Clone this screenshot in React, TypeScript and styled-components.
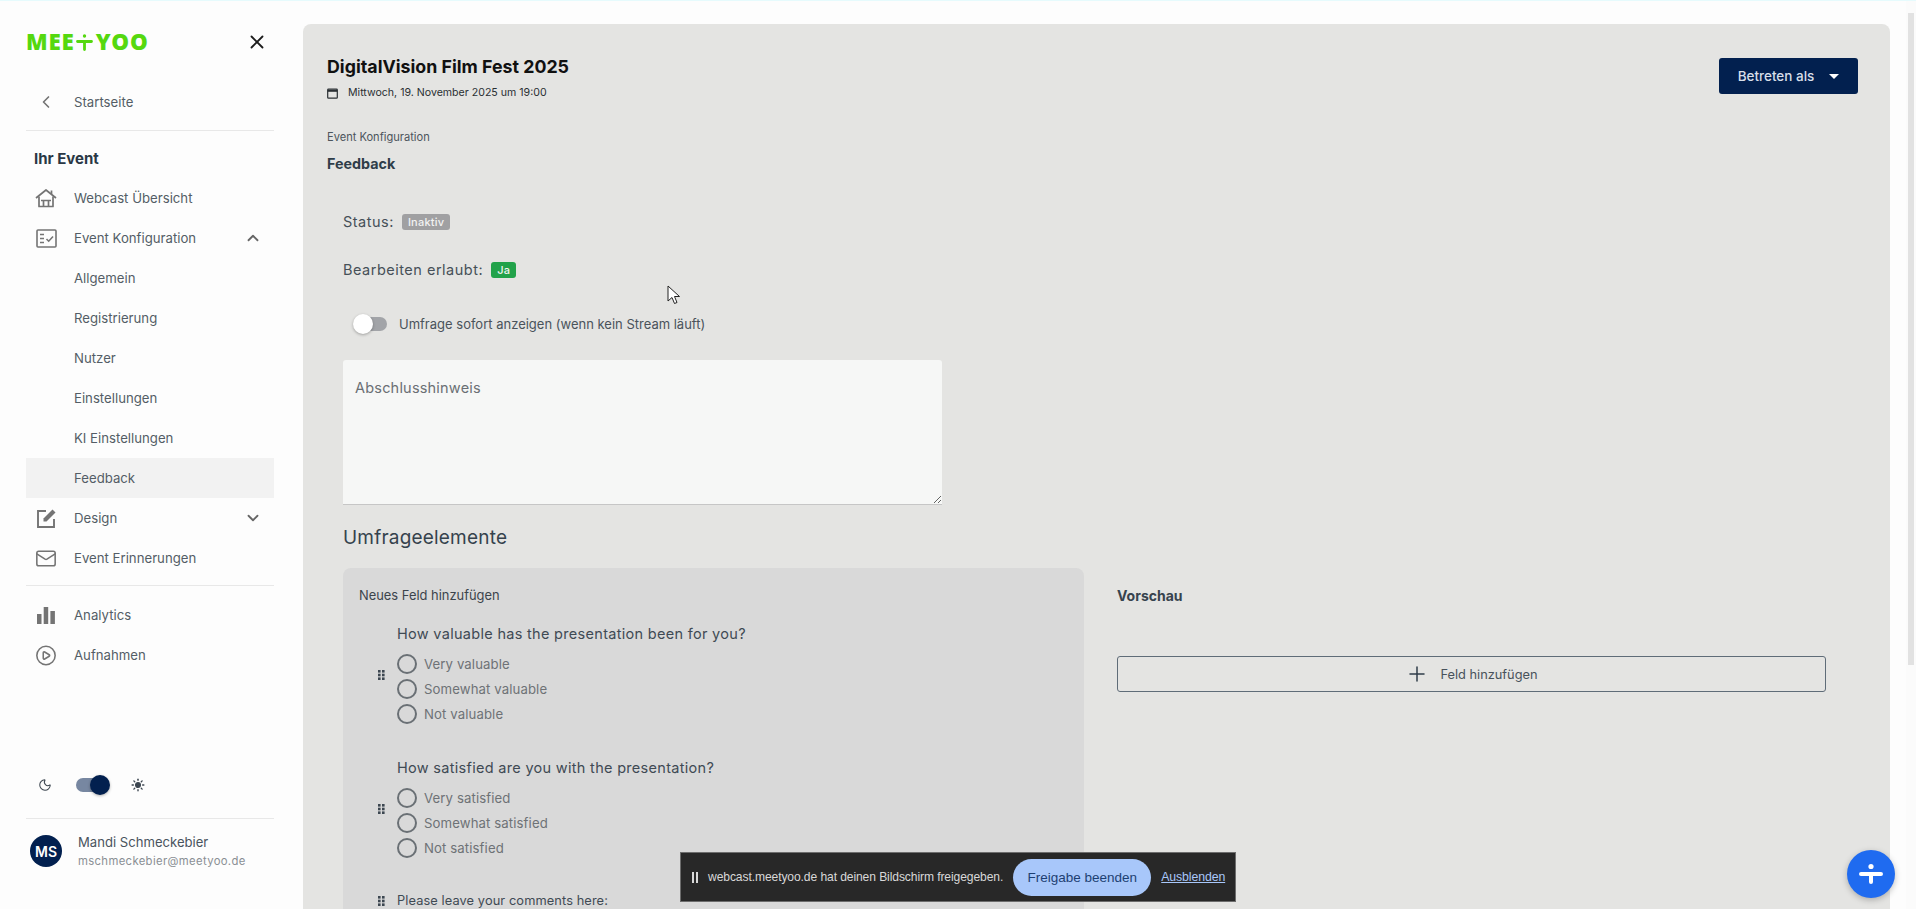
import React from 'react';
import styled, { createGlobalStyle } from 'styled-components';
import {
  ChevronLeft, ChevronUp, ChevronDown, X, Mail, CirclePlay, Moon, Sun, Plus,
} from 'lucide-react';

const Global = createGlobalStyle`
  html, body { margin: 0; padding: 0; height: 100%; overflow: hidden; background: #fdfdfd; }
  body { font-family: Inter, "Liberation Sans", sans-serif; color: #2f3a45; }
  #root { height: 100%; }
  * { box-sizing: border-box; }
`;

const Page = styled.div`
  position: relative;
  height: 909px;
  display: flex;
  border-top: 1px solid #e6fbfd;
  background: #fdfdfd;
`;

const Sidebar = styled.aside`
  width: 303px;
  flex: none;
  height: 908px;
  padding: 0 29px 0 26px;
  display: flex;
  flex-direction: column;
`;

const LogoRow = styled.div`
  height: 81px;
  display: flex;
  align-items: center;
  justify-content: space-between;
  padding-right: 6px;
  color: #1c1c1c;
`;

const Logo = styled.div`
  font-family: "Open Sans", sans-serif;
  font-weight: 800;
  font-size: 22.4px;
  letter-spacing: 0.8px;
  line-height: 1;
  color: #55d80f;
  display: flex;
  align-items: center;
  margin-top: 2px;
`;

const LogoPlus = styled.svg`
  width: 17px;
  height: 17px;
  margin: 0 3px 0 1px;
`;

const NavRow = styled.div<{ $active?: boolean }>`
  height: 40px;
  display: flex;
  align-items: center;
  font-size: 13.2px;
  color: #545d66;
  padding-left: 9px;
  padding-right: 12px;
  background: ${p => (p.$active ? '#f2f2f2' : 'transparent')};
`;

const NavIcon = styled.span`
  width: 22px;
  height: 24px;
  margin-right: 17px;
  display: flex;
  align-items: center;
  justify-content: center;
  color: #747474;
  flex: none;
`;

const NavText = styled.span<{ $sub?: boolean }>`
  flex: 1;
  margin-left: ${p => (p.$sub ? '39px' : '0')};
`;

const Divider = styled.hr<{ $top?: number; $bottom?: number }>`
  border: 0;
  border-top: 1px solid #e8e8e8;
  margin: ${p => p.$top ?? 0}px 0 ${p => p.$bottom ?? 0}px;
`;

const SectionTitle = styled.div`
  font-size: 15px;
  font-weight: 700;
  color: #2a3845;
  padding-left: 8px;
  height: 40px;
  margin-top: 7px;
  display: flex;
  align-items: center;
`;

const Spacer = styled.div`
  flex: 1;
`;

const ThemeRow = styled.div`
  display: flex;
  align-items: center;
  height: 40px;
  padding-left: 12px;
  color: #3c4650;
`;

const ThemeSwitch = styled.div`
  position: relative;
  width: 32px;
  height: 14px;
  margin: 0 23px 0 24px;
  border-radius: 7px;
  background: #7787a1;
`;

const ThemeKnob = styled.div`
  position: absolute;
  right: -2px;
  top: -3px;
  width: 20px;
  height: 20px;
  border-radius: 50%;
  background: #02204f;
  box-shadow: 0 1px 3px rgba(0, 0, 0, 0.3);
`;

const UserRow = styled.div`
  height: 90px;
  display: flex;
  align-items: flex-start;
  padding: 16px 0 0 4px;
  gap: 16px;
`;

const Avatar = styled.div`
  width: 32px;
  height: 32px;
  border-radius: 50%;
  background: #02204f;
  color: #fff;
  display: flex;
  align-items: center;
  justify-content: center;
  font-size: 14px;
  font-weight: 600;
`;

const UserName = styled.div`
  font-size: 13.1px;
  color: #4a545e;
  line-height: 18px;
  margin-top: -2px;
`;

const UserMail = styled.div`
  font-size: 11.3px;
  letter-spacing: 0.35px;
  color: #8a8f94;
  line-height: 18px;
  margin-top: 1px;
`;

const Scroller = styled.div`
  flex: 1;
  height: 908px;
  overflow: hidden;
  padding: 23px 26px 0 0;
  position: relative;
`;

const ScrollTrack = styled.div`
  position: absolute;
  right: 0;
  top: 0;
  bottom: 0;
  width: 10px;
  background: #fbfbfb;
`;

const ScrollThumb = styled.div`
  position: absolute;
  left: 2px;
  right: 2px;
  top: 12px;
  height: 652px;
  background: #e2e2e2;
`;

const MainPanel = styled.main`
  min-height: 1200px;
  background: #e4e4e2;
  border-radius: 8px 8px 0 0;
  padding: 31px 24px 0;
`;

const HeaderRow = styled.div`
  display: flex;
  justify-content: space-between;
  align-items: flex-start;
`;

const EventTitle = styled.h1`
  margin: 0;
  font-size: 17.8px;
  line-height: 24px;
  font-weight: 700;
  color: #111;
`;

const DateLine = styled.div`
  display: flex;
  align-items: center;
  gap: 10px;
  font-size: 10.6px;
  line-height: 14px;
  color: #2a2f33;
  margin-top: 7px;
`;

const EnterButton = styled.button`
  height: 36px;
  width: 139px;
  margin: 3px 8px 0 0;
  border: 0;
  border-radius: 3px;
  background: #02204f;
  color: #d8dfe9;
  font: 500 13.5px Inter, sans-serif;
  display: flex;
  align-items: center;
  justify-content: center;
  gap: 15px;
`;

const Caret = styled.span`
  width: 0;
  height: 0;
  border-left: 5px solid transparent;
  border-right: 5px solid transparent;
  border-top: 5px solid #fff;
`;

const Crumb = styled.div`
  font-size: 11.1px;
  line-height: 14px;
  color: #4c555c;
  margin-top: 30px;
`;

const PageTitle = styled.h2`
  margin: 10px 0 0;
  font-size: 14.3px;
  line-height: 20px;
  font-weight: 700;
  color: #2f3d49;
`;

const Body = styled.div`
  padding: 0 0 0 16px;
`;

const StatusRow = styled.div<{ $top: number }>`
  display: flex;
  align-items: center;
  gap: 8px;
  margin-top: ${p => p.$top}px;
  font-size: 14.5px;
  line-height: 20px;
  letter-spacing: 0.5px;
  color: #465058;
`;

const Badge = styled.span<{ $bg: string }>`
  background: ${p => p.$bg};
  color: #f2f2f2;
  border-radius: 3px;
  font-size: 11px;
  font-weight: 500;
  line-height: 16px;
  padding: 0 6px;
  letter-spacing: 0.2px;
`;

const ToggleRow = styled.div`
  display: flex;
  align-items: center;
  margin: 34px 0 0 10px;
  gap: 12px;
  font-size: 13px;
  line-height: 20px;
  color: #4a535b;
`;

const Toggle = styled.div`
  position: relative;
  width: 32px;
  height: 14px;
  margin-left: 2px;
  border-radius: 7px;
  background: #a2a4a8;
`;

const ToggleKnob = styled.div`
  position: absolute;
  left: -2px;
  top: -3px;
  width: 20px;
  height: 20px;
  border-radius: 50%;
  background: #fff;
  box-shadow: 0 1px 3px rgba(0, 0, 0, 0.3);
`;

const NoteArea = styled.textarea`
  display: block;
  width: 599px;
  height: 145px;
  margin-top: 26px;
  padding: 19px 12px;
  border: 0;
  border-bottom: 1px solid #c6c6c6;
  border-radius: 3px 3px 0 0;
  background: #f6f7f6;
  font: 14.5px Inter, sans-serif;
  letter-spacing: 0.2px;
  outline: none;
  &::placeholder { color: #6a6f74; opacity: 1; }
`;

const SectionHeading = styled.h3`
  margin: 19px 0 0;
  font-size: 19px;
  line-height: 28px;
  font-weight: 400;
  letter-spacing: 0.2px;
  color: #35424d;
`;

const Columns = styled.div`
  display: flex;
  margin-top: 16px;
`;

const BuilderCard = styled.div`
  width: 741px;
  flex: none;
  min-height: 520px;
  background: #d9d9d9;
  border-radius: 8px;
  padding: 18px 16px 0;
`;

const CardLabel = styled.div`
  font-size: 12.9px;
  line-height: 20px;
  color: #3c444c;
`;

const FieldBlock = styled.div<{ $top: number }>`
  display: flex;
  align-items: center;
  margin-top: ${p => p.$top}px;
`;

const Grip = styled.span`
  width: 38px;
  padding-left: 19px;
  flex: none;
  display: flex;
  color: #3c4650;
`;

const Question = styled.div<{ $small?: boolean }>`
  font-size: ${p => (p.$small ? '12.8px' : '14.5px')};
  line-height: 20px;
  letter-spacing: ${p => (p.$small ? '0.1px' : '0.3px')};
  color: #3f4a54;
`;

const Options = styled.div`
  margin-top: 7px;
`;

const Option = styled.label`
  height: 25px;
  display: flex;
  align-items: center;
  gap: 7px;
  font-size: 13.2px;
  letter-spacing: 0.1px;
  color: #6e7276;
`;

const Radio = styled.span`
  width: 20px;
  height: 20px;
  border: 2px solid #6a7075;
  border-radius: 50%;
`;

const PreviewColumn = styled.div`
  width: 709px;
  margin-left: 33px;
  padding-top: 18px;
`;

const PreviewTitle = styled.div`
  font-size: 14px;
  font-weight: 700;
  line-height: 20px;
  color: #37434e;
`;

const AddFieldButton = styled.button`
  width: 100%;
  height: 36px;
  margin-top: 50px;
  border: 1px solid #5f6c78;
  border-width: 1.5px 1px;
  border-radius: 3px;
  background: transparent;
  color: #48525b;
  font: 12.8px Inter, sans-serif;
  display: flex;
  align-items: center;
  justify-content: center;
  gap: 11px;
`;

const ShareBar = styled.div`
  position: absolute;
  left: 680px;
  top: 851px;
  width: 556px;
  height: 50px;
  background: #282828;
  border: 1px solid #6d6d6d;
  display: flex;
  align-items: center;
  padding-left: 11px;
  font-family: "Liberation Sans", sans-serif;
  font-size: 12.1px;
  letter-spacing: -0.1px;
  color: #d8d8d8;
`;

const PauseIcon = styled.span`
  width: 6px;
  height: 11px;
  margin-right: 10px;
  border-left: 2px solid #d8d8d8;
  border-right: 2px solid #d8d8d8;
`;

const StopButton = styled.button`
  width: 138px;
  height: 37px;
  margin: 0 10px;
  border: 0;
  border-radius: 19px;
  background: #a8c7fa;
  color: #1d3f72;
  font: 13.5px "Liberation Sans", sans-serif;
`;

const HideLink = styled.a`
  color: #a8c7fa;
  font-size: 12.3px;
  text-decoration: underline;
`;

const Fab = styled.button`
  position: absolute;
  left: 1847px;
  top: 849px;
  width: 48px;
  height: 48px;
  border: 0;
  border-radius: 50%;
  background: #1f6bf0;
  box-shadow: 0 2px 6px rgba(0, 0, 0, 0.25);
  display: flex;
  align-items: center;
  justify-content: center;
  padding: 0;
`;

const Cursor = styled.svg`
  position: absolute;
  left: 667px;
  top: 284px;
  width: 14px;
  height: 21px;
`;

const HomeIcon = () => (
  <svg width="22" height="20" viewBox="0 0 22 20" fill="none" stroke="currentColor" strokeWidth="1.7" strokeLinejoin="round">
    <path d="M1 10 11 2l10 8" />
    <path d="M4 8.500V18.500h14V8.500" />
    <path d="M8.500 18.500v-6h5v6M6 12.500h10" />
    <path d="M16.500 2.500v3.500" />
  </svg>
);
const ConfigIcon = () => (
  <svg width="21" height="19" viewBox="0 0 21 19" fill="none" stroke="currentColor" strokeWidth="1.6">
    <rect x="1" y="1" width="19" height="17" rx="1" />
    <path d="M4 5.500h4M4 9.500h4M4 13.500h4M10.500 10l2.200 2.200L17 7.500" />
  </svg>
);
const DesignIcon = () => (
  <svg width="21" height="21" viewBox="0 0 21 21" fill="none" stroke="currentColor" strokeWidth="1.9">
    <path d="M10 3H2v16h16v-8" />
    <path d="M7.500 13.500v-3L16.500 1.500l3 3-9 9z" fill="currentColor" stroke="none" />
  </svg>
);
const BarsIcon = () => (
  <svg width="18" height="17" viewBox="0 0 18 17" fill="currentColor">
    <rect x="0" y="7" width="4.500" height="10" />
    <rect x="6.700" y="0" width="4.500" height="17" />
    <rect x="13.400" y="4" width="4.500" height="13" />
  </svg>
);
const CalendarIcon = () => (
  <svg width="11" height="11" viewBox="0 0 11 11" fill="none" stroke="#2a2f33" strokeWidth="1.2">
    <rect x="0.700" y="1.200" width="9.600" height="9" rx="0.800" />
    <path d="M0.700 2.800h9.600" strokeWidth="2" />
  </svg>
);
const GripDots = () => (
  <svg width="7" height="10" viewBox="0 0 7 10" fill="currentColor">
    {[0, 3.7, 7.4].map(y => (
      <React.Fragment key={y}>
        <rect x="0" y={y} width="2.600" height="2.600" />
        <rect x="4" y={y} width="2.600" height="2.600" />
      </React.Fragment>
    ))}
  </svg>
);

type Item = { label: string; icon?: React.ReactNode; chevron?: 'up' | 'down'; sub?: boolean; active?: boolean };
const configItems: Item[] = [
  { label: 'Webcast Übersicht', icon: <HomeIcon /> },
  { label: 'Event Konfiguration', icon: <ConfigIcon />, chevron: 'up' },
  { label: 'Allgemein', sub: true },
  { label: 'Registrierung', sub: true },
  { label: 'Nutzer', sub: true },
  { label: 'Einstellungen', sub: true },
  { label: 'KI Einstellungen', sub: true },
  { label: 'Feedback', sub: true, active: true },
  { label: 'Design', icon: <DesignIcon />, chevron: 'down' },
  { label: 'Event Erinnerungen', icon: <Mail size={23} strokeWidth={1.7} /> },
];
const mediaItems: Item[] = [
  { label: 'Analytics', icon: <BarsIcon /> },
  { label: 'Aufnahmen', icon: <CirclePlay size={23} strokeWidth={1.7} /> },
];

const Nav = ({ item }: { item: Item }) => (
  <NavRow $active={item.active}>
    {item.icon && <NavIcon>{item.icon}</NavIcon>}
    <NavText $sub={item.sub}>{item.label}</NavText>
    {item.chevron === 'up' && <ChevronUp size={18} color="#666" strokeWidth={2.4} />}
    {item.chevron === 'down' && <ChevronDown size={18} color="#666" strokeWidth={2.4} />}
  </NavRow>
);

const questions = [
  { q: 'How valuable has the presentation been for you?', o: ['Very valuable', 'Somewhat valuable', 'Not valuable'], top: 18 },
  { q: 'How satisfied are you with the presentation?', o: ['Very satisfied', 'Somewhat satisfied', 'Not satisfied'], top: 32 },
];

export default function App() {
  return (
    <Page>
      <Global />
      <Sidebar>
        <LogoRow>
          <Logo>
            MEE
            <LogoPlus viewBox="0 0 17 17">
              <path d="M1.500 7.500h14M8.500 7.500v8" stroke="#55d80f" strokeWidth="2.800" strokeLinecap="round" />
              <circle cx="8.500" cy="2" r="1.700" fill="#55d80f" />
            </LogoPlus>
            YOO
          </Logo>
          <X size={22} strokeWidth={2} />
        </LogoRow>
        <NavRow>
          <NavIcon><ChevronLeft size={20} strokeWidth={2} /></NavIcon>
          <NavText>Startseite</NavText>
        </NavRow>
        <Divider $top={8} />
        <SectionTitle>Ihr Event</SectionTitle>
        {configItems.map(i => <Nav key={i.label} item={i} />)}
        <Divider $top={7} $bottom={9} />
        {mediaItems.map(i => <Nav key={i.label} item={i} />)}
        <Spacer />
        <ThemeRow>
          <Moon size={14} strokeWidth={1.8} />
          <ThemeSwitch><ThemeKnob /></ThemeSwitch>
          <Sun size={14} strokeWidth={2.4} fill="currentColor" />
        </ThemeRow>
        <Divider $top={13} />
        <UserRow>
          <Avatar>MS</Avatar>
          <div>
            <UserName>Mandi Schmeckebier</UserName>
            <UserMail>mschmeckebier@meetyoo.de</UserMail>
          </div>
        </UserRow>
      </Sidebar>

      <Scroller>
        <MainPanel>
          <HeaderRow>
            <div>
              <EventTitle>DigitalVision Film Fest 2025</EventTitle>
              <DateLine><CalendarIcon />Mittwoch, 19. November 2025 um 19:00</DateLine>
            </div>
            <EnterButton>Betreten als<Caret /></EnterButton>
          </HeaderRow>
          <Crumb>Event Konfiguration</Crumb>
          <PageTitle>Feedback</PageTitle>
          <Body>
            <StatusRow $top={38}>Status: <Badge $bg="#a0a0a2">Inaktiv</Badge></StatusRow>
            <StatusRow $top={28}>Bearbeiten erlaubt: <Badge $bg="#22a24a">Ja</Badge></StatusRow>
            <ToggleRow>
              <Toggle><ToggleKnob /></Toggle>
              Umfrage sofort anzeigen (wenn kein Stream läuft)
            </ToggleRow>
            <NoteArea placeholder="Abschlusshinweis" />
            <SectionHeading>Umfrageelemente</SectionHeading>
            <Columns>
              <BuilderCard>
                <CardLabel>Neues Feld hinzufügen</CardLabel>
                {questions.map(block => (
                  <FieldBlock key={block.q} $top={block.top}>
                    <Grip><GripDots /></Grip>
                    <div>
                      <Question>{block.q}</Question>
                      <Options>
                        {block.o.map(o => (
                          <Option key={o}><Radio />{o}</Option>
                        ))}
                      </Options>
                    </div>
                  </FieldBlock>
                ))}
                <FieldBlock $top={31}>
                  <Grip><GripDots /></Grip>
                  <Question $small>Please leave your comments here:</Question>
                </FieldBlock>
              </BuilderCard>
              <PreviewColumn>
                <PreviewTitle>Vorschau</PreviewTitle>
                <AddFieldButton><Plus size={24} strokeWidth={1.5} color="#2f3d49" />Feld hinzufügen</AddFieldButton>
              </PreviewColumn>
            </Columns>
          </Body>
        </MainPanel>
        <ScrollTrack><ScrollThumb /></ScrollTrack>
      </Scroller>

      <Cursor viewBox="0 0 14 21">
        <path d="M1 1v15l4-3.500 2.500 6 2.500-1-2.500-6H12.500z" fill="#fff" stroke="#222" strokeWidth="1" />
      </Cursor>

      <ShareBar>
        <PauseIcon />
        webcast.meetyoo.de hat deinen Bildschirm freigegeben.
        <StopButton>Freigabe beenden</StopButton>
        <HideLink>Ausblenden</HideLink>
      </ShareBar>

      <Fab>
        <svg width="26" height="26" viewBox="0 0 26 26">
          <path d="M3 13h20M13 13v8" stroke="#fff" strokeWidth="4" strokeLinecap="round" />
          <circle cx="13" cy="5.500" r="2.600" fill="#fff" />
        </svg>
      </Fab>
    </Page>
  );
}
